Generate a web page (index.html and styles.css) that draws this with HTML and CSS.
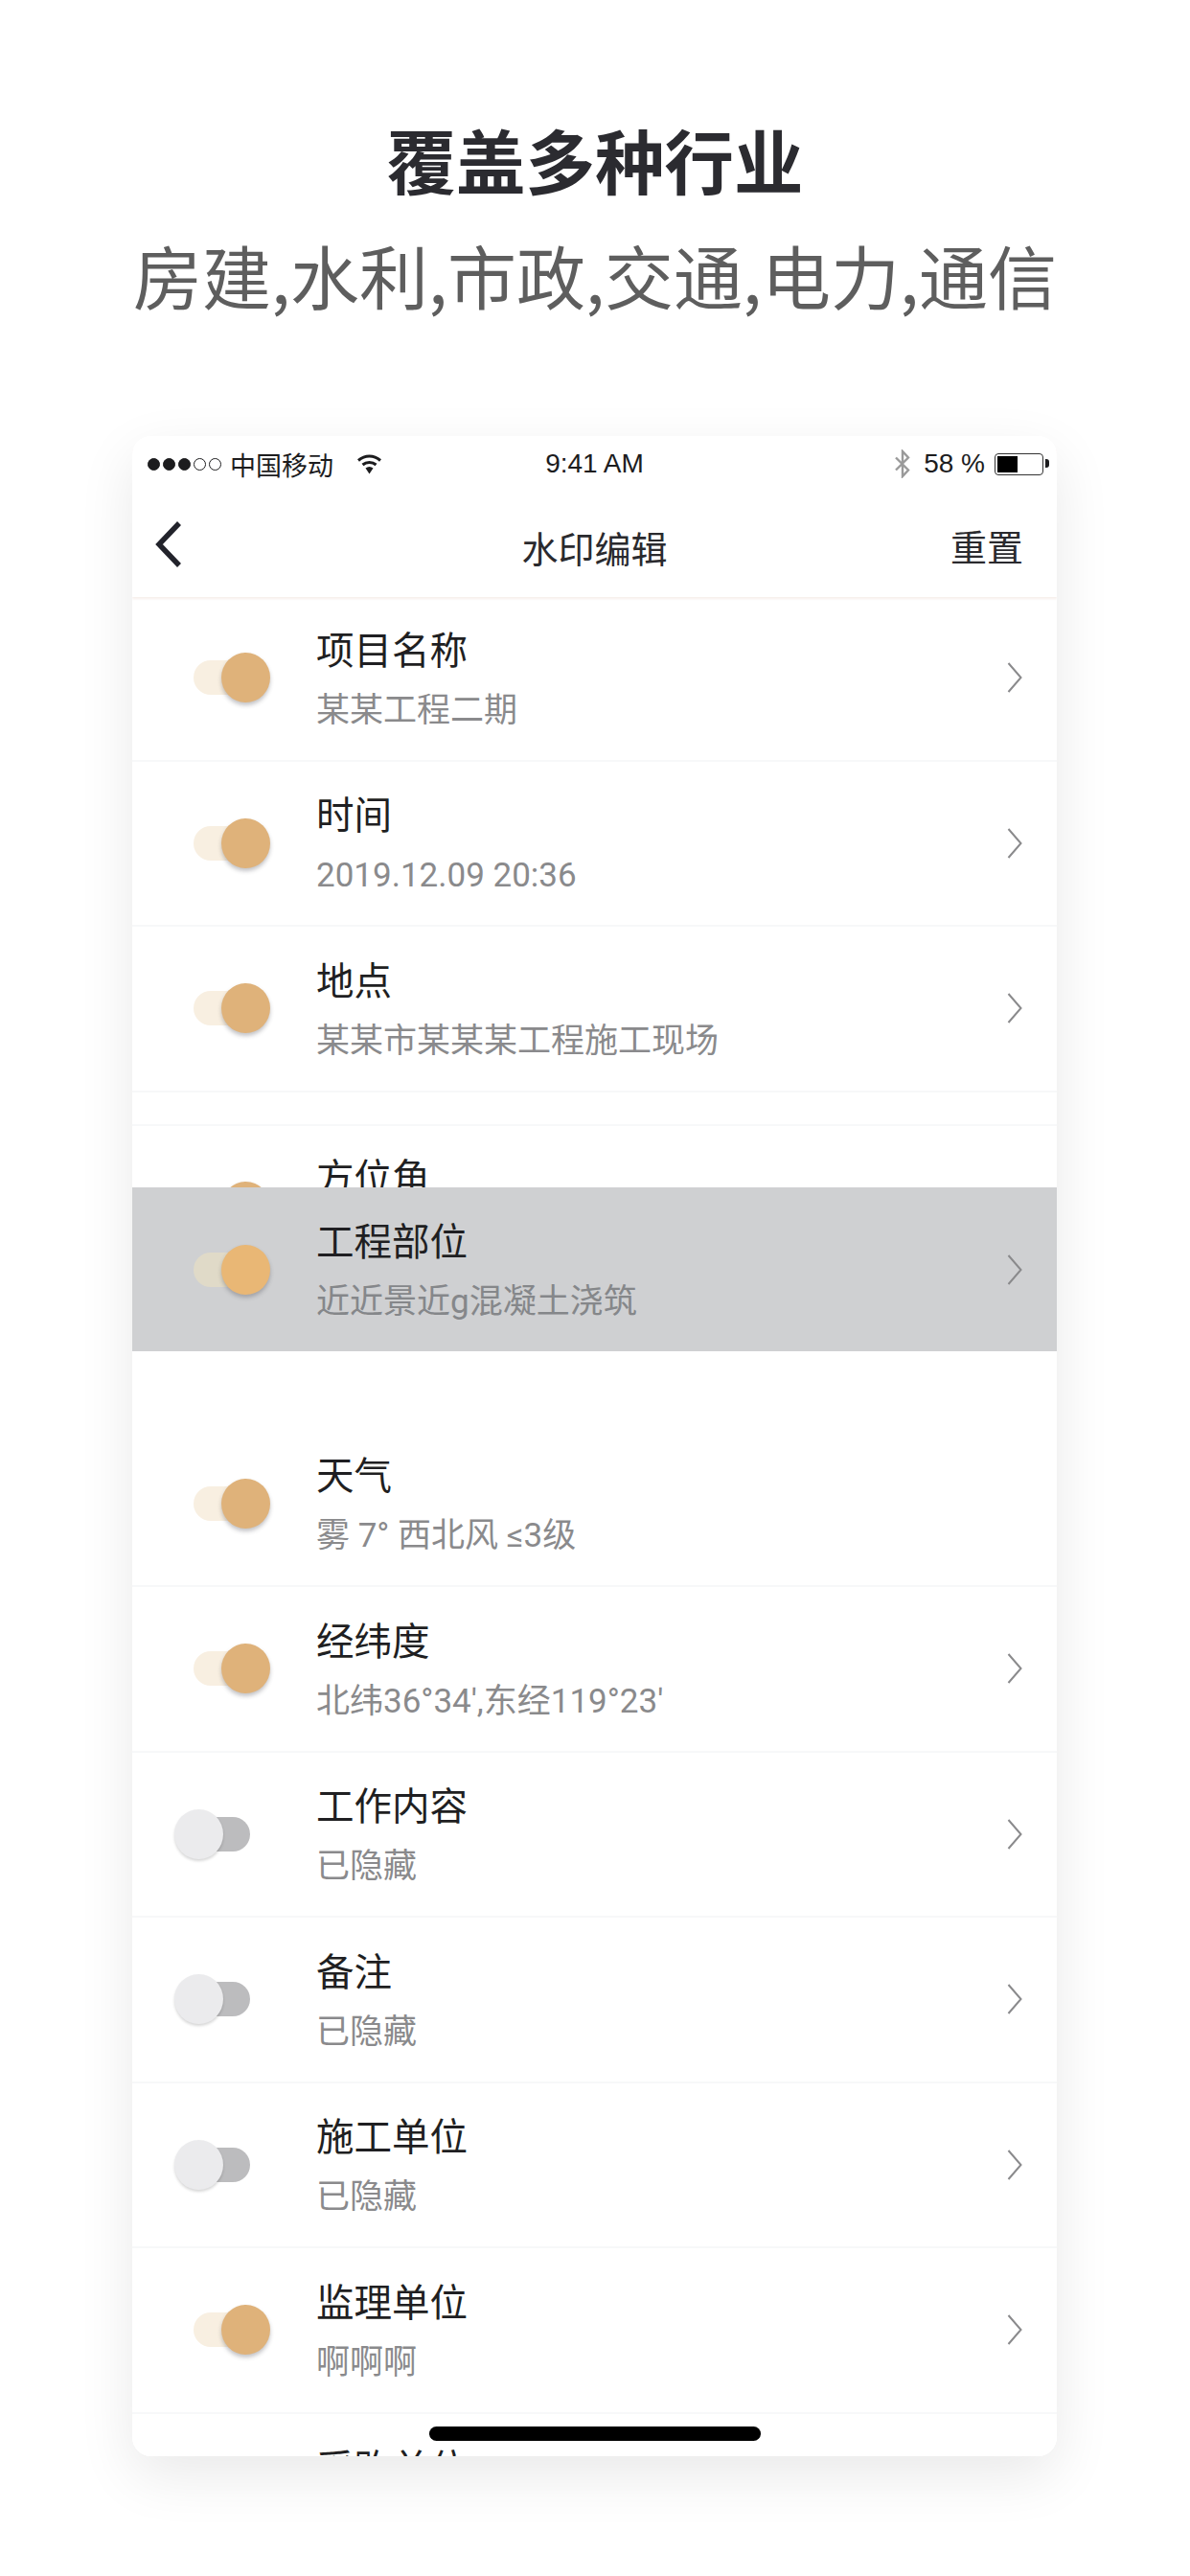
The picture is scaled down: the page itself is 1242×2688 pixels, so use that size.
FILE: index.html
```html
<!DOCTYPE html>
<html lang="zh">
<head>
  <meta charset="utf-8">
  <link rel="stylesheet" href="styles.css">
</head>
<body>
  <header class="intro">
    <h1 class="intro-title">覆盖多种行业</h1>
    <p class="intro-sub">房建,水利,市政,交通,电力,通信</p>
  </header>

  <main class="phone">
    <div class="top">
      <div class="status">
        <div class="status-left">
          <span class="signal"><i class="on"></i><i class="on"></i><i class="on"></i><i></i><i></i></span>
          <span class="carrier">中国移动</span>
          <svg class="wifi" viewBox="0 0 27 22">
            <path d="M2 7.5C9 1.5 18 1.5 25 7.5" fill="none" stroke="#1c1c1e" stroke-width="3"/>
            <path d="M6.5 12C10.5 8.5 16.5 8.5 20.5 12" fill="none" stroke="#1c1c1e" stroke-width="3"/>
            <path d="M9.5 15.5L13.5 21.5L17.5 15.5C15 13.5 12 13.5 9.5 15.5Z" fill="#1c1c1e"/>
          </svg>
        </div>
        <span class="time">9:41 AM</span>
        <div class="status-right">
          <svg class="bluetooth" viewBox="0 0 18 30">
            <path d="M2 8.5L15 21.5L9 28V2L15 8.5L2 21.5" fill="none" stroke="#9a9a9a" stroke-width="2.4"/>
          </svg>
          <span class="percent">58 %</span>
          <span class="battery"><span class="battery-level"></span></span>
        </div>
      </div>
      <nav class="nav">
        <svg class="back" viewBox="0 0 30 50">
          <path d="M26 3L5 25L26 47" fill="none" stroke="#22232b" stroke-width="5.5"/>
        </svg>
        <span class="nav-title">水印编辑</span>
        <span class="nav-action">重置</span>
      </nav>
    </div>

    <ul class="list">
      <li class="row">
        <span class="toggle is-on"><i></i></span>
        <div class="row-text"><div class="row-title">项目名称</div><div class="row-sub">某某工程二期</div></div>
        <svg class="chevron" viewBox="0 0 16 32"><path d="M1.5 1L14.5 16L1.5 31"/></svg>
      </li>
      <li class="row">
        <span class="toggle is-on"><i></i></span>
        <div class="row-text"><div class="row-title">时间</div><div class="row-sub">2019.12.09 20:36</div></div>
        <svg class="chevron" viewBox="0 0 16 32"><path d="M1.5 1L14.5 16L1.5 31"/></svg>
      </li>
      <li class="row">
        <span class="toggle is-on"><i></i></span>
        <div class="row-text"><div class="row-title">地点</div><div class="row-sub">某某市某某某工程施工现场</div></div>
        <svg class="chevron" viewBox="0 0 16 32"><path d="M1.5 1L14.5 16L1.5 31"/></svg>
      </li>
      <li class="row row-before-drop">
        <span class="toggle is-on"><i></i></span>
        <div class="row-text"><div class="row-title">方位角</div></div>
      </li>
      <li class="row">
        <span class="toggle is-on"><i></i></span>
        <div class="row-text"><div class="row-title">天气</div><div class="row-sub">雾 7° 西北风 ≤3级</div></div>
      </li>
      <li class="row">
        <span class="toggle is-on"><i></i></span>
        <div class="row-text"><div class="row-title">经纬度</div><div class="row-sub">北纬36°34',东经119°23'</div></div>
        <svg class="chevron" viewBox="0 0 16 32"><path d="M1.5 1L14.5 16L1.5 31"/></svg>
      </li>
      <li class="row">
        <span class="toggle"><i></i></span>
        <div class="row-text"><div class="row-title">工作内容</div><div class="row-sub">已隐藏</div></div>
        <svg class="chevron" viewBox="0 0 16 32"><path d="M1.5 1L14.5 16L1.5 31"/></svg>
      </li>
      <li class="row">
        <span class="toggle"><i></i></span>
        <div class="row-text"><div class="row-title">备注</div><div class="row-sub">已隐藏</div></div>
        <svg class="chevron" viewBox="0 0 16 32"><path d="M1.5 1L14.5 16L1.5 31"/></svg>
      </li>
      <li class="row">
        <span class="toggle"><i></i></span>
        <div class="row-text"><div class="row-title">施工单位</div><div class="row-sub">已隐藏</div></div>
        <svg class="chevron" viewBox="0 0 16 32"><path d="M1.5 1L14.5 16L1.5 31"/></svg>
      </li>
      <li class="row">
        <span class="toggle is-on"><i></i></span>
        <div class="row-text"><div class="row-title">监理单位</div><div class="row-sub">啊啊啊</div></div>
        <svg class="chevron" viewBox="0 0 16 32"><path d="M1.5 1L14.5 16L1.5 31"/></svg>
      </li>
      <li class="row">
        <div class="row-text row-text-last"><div class="row-title">采购单位</div></div>
      </li>
    </ul>

    <!-- row being dragged, floats over the list -->
    <div class="row row-dragging">
      <span class="toggle is-on"><i></i></span>
      <div class="row-text"><div class="row-title">工程部位</div><div class="row-sub">近近景近g混凝土浇筑</div></div>
      <svg class="chevron" viewBox="0 0 16 32"><path d="M1.5 1L14.5 16L1.5 31"/></svg>
    </div>

    <div class="home-bar"></div>
  </main>
</body>
</html>
```

FILE: styles.css
```css
* {
  box-sizing: border-box;
}

body {
  margin: 0;
  background: #fff;
  font-family: Roboto, "Noto Sans CJK SC", sans-serif;
}

.intro {
  padding-top: 116px;
  text-align: center;
  font-family: "Noto Sans CJK SC", sans-serif;
}

.intro-title {
  margin: 0;
  font-size: 72.5px;
  line-height: 100px;
  font-weight: 700;
  color: #2b2b30;
}

.intro-sub {
  margin: 20px 0 0;
  font-size: 72px;
  line-height: 100px;
  font-weight: 400;
  color: #5e5e5e;
}

.phone {
  position: relative;
  width: 965px;
  height: 2108px;
  margin: 119px 0 0 138px;
  background: #fff;
  border-radius: 20px;
  overflow: hidden;
}

body::before {
  content: "";
  position: absolute;
  top: 455px;
  left: 138px;
  width: 965px;
  height: 2108px;
  border-radius: 20px;
  box-shadow: 0 20px 60px rgba(0,0,0,0.09);
}

.top {
  position: relative;
  z-index: 2;
  background: #fff;
  box-shadow: 0 2px 2px rgba(235,215,205,0.4);
}

.status {
  display: grid;
  grid-template-columns: 1fr auto 1fr;
  align-items: center;
  height: 58px;
  padding: 0 9px 0 16px;
  font-family: "Liberation Sans", "Noto Sans CJK SC", sans-serif;
  font-size: 28px;
  color: #1c1c1e;
}

.status-left,
.status-right {
  display: flex;
  align-items: center;
}

.status-right {
  justify-content: flex-end;
}

.signal {
  display: flex;
  gap: 3px;
  margin-right: 9px;
}

.signal i {
  width: 13px;
  height: 13px;
  border: 1.5px solid #1c1c1e;
  border-radius: 50%;
}

.signal i.on {
  background: #1c1c1e;
}

.carrier {
  font-family: "Noto Sans CJK SC", sans-serif;
  font-size: 27px;
}

.wifi {
  width: 27px;
  height: 22px;
  margin-left: 24px;
}

.time {
  margin-right: 7px;
}

.bluetooth {
  width: 18px;
  height: 30px;
  margin-right: 13px;
}

.battery {
  position: relative;
  display: block;
  width: 51px;
  height: 23px;
  margin-left: 10px;
  margin-right: 5px;
  padding: 2px;
  border: 1.5px solid #333;
  border-radius: 4px;
}

.battery::after {
  content: "";
  position: absolute;
  top: 5px;
  right: -7px;
  width: 4px;
  height: 9px;
  background: #1c1c1e;
  border-radius: 0 3px 3px 0;
}

.battery-level {
  display: block;
  width: 21px;
  height: 100%;
  background: #000;
}

.nav {
  position: relative;
  display: flex;
  align-items: center;
  justify-content: center;
  height: 110px;
  padding-top: 5px;
  font-family: "Noto Sans CJK SC", sans-serif;
  font-size: 38px;
  color: #2a2a2e;
}

.back {
  position: absolute;
  left: 22px;
  top: 30px;
  width: 32px;
  height: 50px;
}

.nav-action {
  position: absolute;
  right: 35px;
  top: 29px;
  line-height: 54px;
}

.list {
  margin: -1px 0 0;
  padding: 0;
  list-style: none;
}

.row {
  display: flex;
  align-items: center;
  height: 172.5px;
  padding-left: 44px;
  padding-right: 36px;
  background: #fff;
  border-bottom: 2px solid #f7f8f9;
}

.row-before-drop {
  margin-bottom: 138.5px;
  border-top: 2px solid #f7f8f9;
}

.row:nth-child(3) {
  margin-bottom: 33px;
}

.toggle {
  position: relative;
  flex: none;
  width: 99px;
  height: 52px;
  margin-right: 49px;
}

.toggle::before {
  content: "";
  position: absolute;
  left: 20px;
  top: 8px;
  width: 59px;
  height: 36px;
  border-radius: 18px;
  background: #bcbcbe;
}

.toggle i {
  position: absolute;
  left: 0;
  top: 0;
  width: 51px;
  height: 52px;
  border-radius: 50%;
  background: #ebebed;
  box-shadow: 0 2px 3px rgba(0,0,0,0.16);
}

.toggle.is-on::before {
  background: #f8efe1;
}

.toggle.is-on i {
  left: 49px;
  background: #dfb27a;
  box-shadow: 0 3px 4px rgba(60,60,70,0.3);
}

.row-text {
  flex: 1;
  padding-top: 7px;
}

.row-text-last {
  margin-left: 148px;
  padding-top: 0;
  align-self: flex-start;
  margin-top: 33px;
}

.row-title {
  font-size: 39.5px;
  line-height: 50px;
  color: #1f1f22;
}

.row-sub {
  margin-top: 12px;
  font-size: 35px;
  line-height: 50px;
  color: #8a8a8c;
}

.row-before-drop .row-text {
  align-self: flex-start;
  padding-top: 30px;
}

.chevron {
  flex: none;
  width: 16px;
  height: 32px;
  fill: none;
  stroke: #8a8a8c;
  stroke-width: 2;
}

.row-dragging {
  position: absolute;
  z-index: 3;
  left: 0;
  top: 784px;
  width: 100%;
  height: 171px;
  background: #cfd0d2;
  border-bottom: 0;
}

.row-dragging .toggle.is-on::before {
  background: #e0dac8;
}

.row-dragging .toggle.is-on i {
  background: #e9b775;
}

.row-dragging .row-sub {
  color: #85878a;
}

.home-bar {
  position: absolute;
  z-index: 4;
  left: 310px;
  bottom: 16px;
  width: 346px;
  height: 15px;
  border-radius: 8px;
  background: #000;
}
```
